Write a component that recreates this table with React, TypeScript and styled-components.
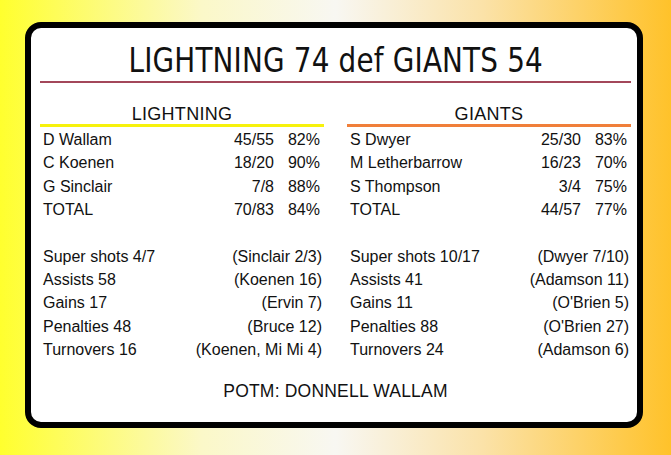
import React from "react";
import styled, { createGlobalStyle } from "styled-components";

const Global = createGlobalStyle`
  html, body { margin: 0; padding: 0; }
  body {
    width: 671px;
    height: 455px;
    overflow: hidden;
    background: linear-gradient(90deg, #ffff2e 0%, #fbf8c8 30%, #f8f7f2 50%, #fbe2a8 72%, #ffc22a 100%);
    font-family: "Liberation Sans", Arial, sans-serif;
    color: #111;
  }
`;

const Page = styled.main`
  padding: 22px 0 0 25px;
`;

const Card = styled.section`
  box-sizing: border-box;
  width: 618px;
  height: 406px;
  border: 6px solid #000;
  border-radius: 16px;
  background: #fff;
  padding: 12px 6px 0 9px;
  display: flex;
  flex-direction: column;
`;

const Title = styled.h1`
  margin: 0;
  font-family: "DejaVu Sans Condensed", "Liberation Sans", sans-serif;
  font-weight: 400;
  font-size: 34px;
  line-height: 40px;
  text-align: center;
  border-bottom: 2px solid #a3475a;
  padding-bottom: 1px;
`;

/* the reference face is narrower than any installed condensed font */
const TitleText = styled.span`
  display: inline-block;
  transform: scaleX(0.91);
  letter-spacing: 0.2px;
`;

const Columns = styled.div`
  display: grid;
  grid-template-columns: 284px 284px;
  column-gap: 23px;
  margin-top: 21px;
`;

const Team = styled.div`
  display: flex;
  flex-direction: column;
`;

const TeamName = styled.h2<{ $line: string }>`
  margin: 0;
  font-size: 18px;
  line-height: 20px;
  font-weight: 400;
  letter-spacing: 0.3px;
  text-align: center;
  border-bottom: 3px solid ${(p) => p.$line};
  margin-bottom: 1px;
`;

const ShooterRow = styled.div`
  display: grid;
  grid-template-columns: 1fr 60px 46px;
  padding: 0 4px 0 3px;
  font-size: 16px;
  line-height: 23.4px;
`;

const Num = styled.span`
  text-align: right;
`;

const Stats = styled.div`
  margin-top: 23px;
`;

const StatRow = styled.div`
  display: flex;
  justify-content: space-between;
  padding: 0 2px 0 3px;
  font-size: 16px;
  line-height: 23.4px;
`;

const Potm = styled.p`
  margin: 17px 0 0;
  text-align: center;
  font-size: 17.5px;
  line-height: 24px;
  letter-spacing: 0.2px;
`;

type Shooter = [string, string, string];
type Stat = [string, string];

type TeamData = {
  name: string;
  line: string;
  shooters: Shooter[];
  stats: Stat[];
};

const teams: TeamData[] = [
  {
    name: "LIGHTNING",
    line: "#f7f20c",
    shooters: [
      ["D Wallam", "45/55", "82%"],
      ["C Koenen", "18/20", "90%"],
      ["G Sinclair", "7/8", "88%"],
      ["TOTAL", "70/83", "84%"],
    ],
    stats: [
      ["Super shots 4/7", "(Sinclair 2/3)"],
      ["Assists 58", "(Koenen 16)"],
      ["Gains 17", "(Ervin 7)"],
      ["Penalties 48", "(Bruce 12)"],
      ["Turnovers 16", "(Koenen, Mi Mi 4)"],
    ],
  },
  {
    name: "GIANTS",
    line: "#f07f3a",
    shooters: [
      ["S Dwyer", "25/30", "83%"],
      ["M Letherbarrow", "16/23", "70%"],
      ["S Thompson", "3/4", "75%"],
      ["TOTAL", "44/57", "77%"],
    ],
    stats: [
      ["Super shots 10/17", "(Dwyer 7/10)"],
      ["Assists 41", "(Adamson 11)"],
      ["Gains 11", "(O'Brien 5)"],
      ["Penalties 88", "(O'Brien 27)"],
      ["Turnovers 24", "(Adamson 6)"],
    ],
  },
];

const TeamBlock = ({ team }: { team: TeamData }) => (
  <Team>
    <TeamName $line={team.line}>{team.name}</TeamName>
    {team.shooters.map(([who, goals, pct]) => (
      <ShooterRow key={who}>
        <span>{who}</span>
        <Num>{goals}</Num>
        <Num>{pct}</Num>
      </ShooterRow>
    ))}
    <Stats>
      {team.stats.map(([label, leader]) => (
        <StatRow key={label}>
          <span>{label}</span>
          <span>{leader}</span>
        </StatRow>
      ))}
    </Stats>
  </Team>
);

const App = () => (
  <Page>
    <Global />
    <Card>
      <Title>
        <TitleText>LIGHTNING 74 def GIANTS 54</TitleText>
      </Title>
      <Columns>
        {teams.map((t) => (
          <TeamBlock key={t.name} team={t} />
        ))}
      </Columns>
      <Potm>POTM: DONNELL WALLAM</Potm>
    </Card>
  </Page>
);

export default App;
